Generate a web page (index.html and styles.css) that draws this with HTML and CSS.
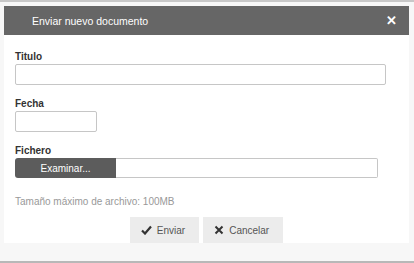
FILE: index.html
```html
<!DOCTYPE html>
<html lang="es">
<head>
    <meta charset="UTF-8">
    <meta name="viewport" content="width=device-width, initial-scale=1.0">
    <title>Enviar nuevo documento</title>
    <link rel="stylesheet" href="styles.css">
</head>
<body>
    <div class="page">
        <div class="modal">
            <div class="modal-header">
                <span class="modal-title">Enviar nuevo documento</span>
                <span class="modal-close">&#x2715;</span>
            </div>
            <div class="modal-body">
                <div class="field">
                    <label class="field-label">Titulo</label>
                    <input type="text" class="input input-wide">
                </div>
                <div class="field">
                    <label class="field-label">Fecha</label>
                    <input type="text" class="input input-date">
                </div>
                <div class="field">
                    <label class="field-label">Fichero</label>
                    <div class="file-row">
                        <span class="file-button">Examinar...</span>
                        <span class="file-name"></span>
                    </div>
                </div>
                <p class="help-text">Tamaño máximo de archivo: 100MB</p>
            </div>
            <div class="modal-footer">
                <button class="btn">
                    <svg width="11" height="10" viewBox="0 0 11 10"><path d="M1 5.5 L4 8.5 L10 1.5" fill="none" stroke="#333" stroke-width="2.2"/></svg>
                    Enviar
                </button>
                <button class="btn">
                    <svg width="10" height="10" viewBox="0 0 10 10"><path d="M1.5 1.5 L8.5 8.5 M8.5 1.5 L1.5 8.5" fill="none" stroke="#333" stroke-width="2"/></svg>
                    Cancelar
                </button>
            </div>
        </div>
    </div>
</body>
</html>
```

FILE: styles.css
```css
/* General Styles */
body {
    margin: 0;
    font-family: 'Liberation Sans', Arial, sans-serif;
    background: #f7f7f7;
    color: #333;
}

.page {
    height: 255px;
    border-top: 2px solid #c8c8c8;
    border-bottom: 2px solid #b8b8b8;
    padding: 4px 5px 0 4px;
}

.modal {
    background: white;
    width: 405px;
}

.modal-header {
    background: #666;
    height: 29px;
    display: flex;
    align-items: center;
    justify-content: space-between;
    padding: 0 12px 0 28px;
    color: white;
}

.modal-title {
    font-size: 10.5px;
}

.modal-close {
    font-size: 13px;
    font-weight: bold;
}

.modal-body {
    padding: 16px 11px 10px 11px;
}

.field {
    margin-bottom: 13px;
}

.field-label {
    display: block;
    font-size: 10px;
    font-weight: bold;
    color: #333;
    margin-bottom: 2px;
}

.input {
    display: block;
    height: 21px;
    box-sizing: border-box;
    border: 1px solid #c6c6c6;
    border-radius: 2px;
    padding: 0;
    margin: 0;
}

.input-wide {
    width: 371px;
}

.input-date {
    width: 82px;
}

.file-row {
    display: flex;
    height: 20px;
}

.file-button {
    width: 101px;
    background: #5c5c5c;
    color: white;
    font-size: 10px;
    border-radius: 3px 0 0 3px;
    display: flex;
    align-items: center;
    justify-content: center;
}

.file-name {
    width: 262px;
    box-sizing: border-box;
    border: 1px solid #c6c6c6;
    border-left: none;
    border-radius: 0 2px 2px 0;
}

.help-text {
    margin: 18px 0 0 0;
    font-size: 10px;
    color: #999;
}

.modal-footer {
    display: flex;
    justify-content: center;
    gap: 4px;
}

.btn {
    display: flex;
    align-items: center;
    gap: 5px;
    height: 26px;
    padding: 0 14px 0 11px;
    background: #ececec;
    border: none;
    font-family: inherit;
    font-size: 10px;
    color: #555;
}
```
